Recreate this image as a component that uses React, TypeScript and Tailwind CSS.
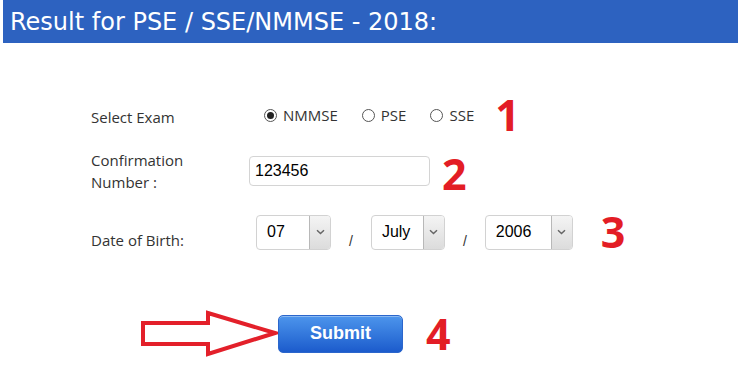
import React from 'react';

const labelFont = { fontFamily: '"Open Sans", "DejaVu Sans", sans-serif' };

const Radio = ({ label, checked }: { label: string; checked?: boolean }) => (
  <label className="flex items-center text-[15px] text-[#333]">
    <span className="flex h-[13px] w-[13px] items-center justify-center rounded-full border border-[#555] bg-white">
      {checked && <span className="h-[7px] w-[7px] rounded-full bg-[#222]" />}
    </span>
    <span className="ml-[6px]">{label}</span>
  </label>
);

const FakeSelect = ({ value, width }: { value: string; width: string }) => (
  <div className={`flex h-[35px] ${width} overflow-hidden rounded-[4px] border border-[#d2d2d2] bg-white`}>
    <div className="flex flex-1 items-center pl-[10px] font-['Liberation_Sans',Arial,sans-serif] text-[16px] text-black">
      {value}
    </div>
    <div className="flex w-[21px] items-center justify-center border-l border-[#b8b8b8] bg-gradient-to-b from-[#f4f4f4] to-[#dcdcdc]">
      <svg width="9" height="6" viewBox="0 0 9 6">
        <path d="M1 1.2 L4.5 4.5 L8 1.2" fill="none" stroke="#666" strokeWidth="1.5" />
      </svg>
    </div>
  </div>
);

const Marker = ({ n, className }: { n: string; className?: string }) => (
  <span className={`font-['Open_Sans',sans-serif] text-[43px] font-bold leading-none text-[#e31d25] ${className ?? ''}`}>
    {n}
  </span>
);

const App: React.FC = () => {
  return (
    <div className="h-[372px] w-[738px] overflow-hidden bg-white">
      <div className="ml-[3px] flex h-[43px] items-center bg-[#2d62c0] pl-[7px] font-['DejaVu_Sans',Verdana,sans-serif] text-[24px] text-white">
        Result for PSE / SSE/NMMSE - 2018:
      </div>

      <div className="pl-[91px] pt-[54px]" style={labelFont}>
        {/* exam */}
        <div className="flex h-[34px] items-center">
          <span className="mt-[7px] w-[173px] text-[15px] text-[#333]">Select Exam</span>
          <div className="mt-[3px] flex items-center gap-[24px]">
            <Radio label="NMMSE" checked />
            <Radio label="PSE" />
            <Radio label="SSE" />
          </div>
          <Marker n="1" className="ml-[21px]" />
        </div>

        {/* confirmation */}
        <div className="mt-[19px] flex h-[42px] items-center">
          <span className="w-[158px] text-[15px] leading-[22px] text-[#333]">
            Confirmation
            <br />
            Number :
          </span>
          <input
            readOnly
            value="123456"
            className="h-[30px] w-[181px] rounded-[4px] border border-[#d4d4d4] px-[5px] font-['Liberation_Sans',Arial,sans-serif] text-[16px] text-black outline-none"
          />
          <Marker n="2" className="ml-[12px] mt-[4px]" />
        </div>

        {/* dob */}
        <div className="mt-[22px] flex h-[36px] items-center">
          <span className="mt-[16px] w-[165px] text-[15px] text-[#333]">Date of Birth:</span>
          <FakeSelect value="07" width="w-[75px]" />
          <span className="mx-[18px] mt-[18px] font-['Liberation_Sans',Arial,sans-serif] text-[14px] text-[#333]">/</span>
          <FakeSelect value="July" width="w-[74px]" />
          <span className="mx-[18px] mt-[18px] font-['Liberation_Sans',Arial,sans-serif] text-[14px] text-[#333]">/</span>
          <FakeSelect value="2006" width="w-[88px]" />
          <Marker n="3" className="ml-[28px] mt-[-2px]" />
        </div>

        {/* submit */}
        <div className="ml-[49px] mt-[60px] flex items-center">
          <svg width="138" height="47" viewBox="0 0 138 47">
            <path
              d="M3 13 L68 13 L68 3 L135 23 L68 44 L68 34 L3 34 Z"
              fill="white"
              stroke="#e3202a"
              strokeWidth="4"
              strokeLinejoin="miter"
            />
          </svg>
          <button className="h-[38px] w-[125px] rounded-[5px] border border-[#2b66cc] bg-gradient-to-b from-[#4d95ec] to-[#1c5bcc] font-['Liberation_Sans',Arial,sans-serif] text-[18px] font-bold text-white shadow-[inset_0_1px_0_rgba(255,255,255,0.35)]">
            Submit
          </button>
          <Marker n="4" className="ml-[23px]" />
        </div>
      </div>
    </div>
  );
};

export default App;
